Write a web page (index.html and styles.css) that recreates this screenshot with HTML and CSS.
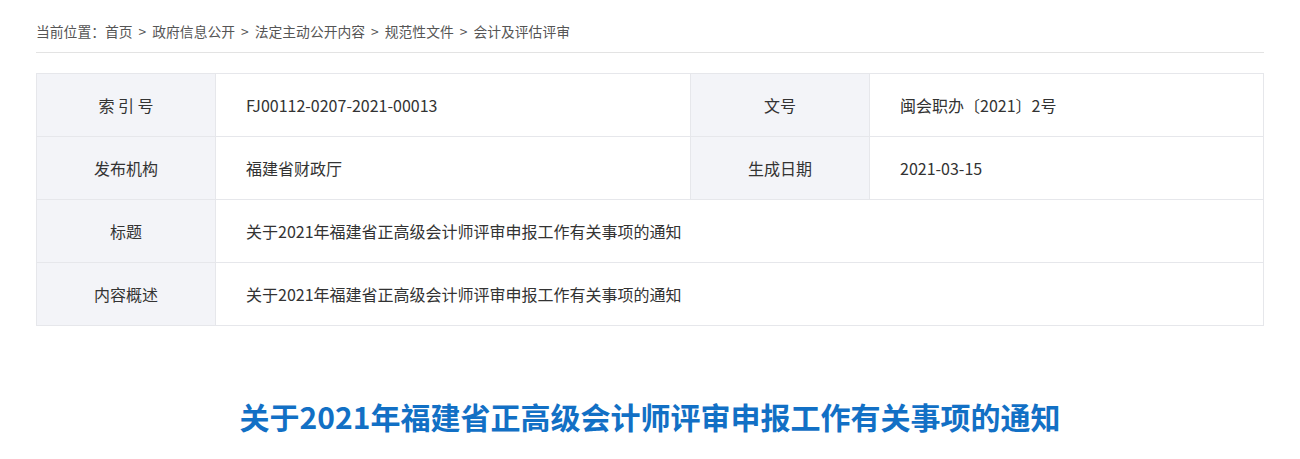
FILE: index.html
```html
<!DOCTYPE html>
<html lang="zh">
<head>
<meta charset="utf-8">
<link rel="stylesheet" href="styles.css">
</head>
<body>
<div class="page">
  <div class="crumb">当前位置：<a>首页</a><span class="sep">&gt;</span><a>政府信息公开</a><span class="sep">&gt;</span><a>法定主动公开内容</a><span class="sep">&gt;</span><a>规范性文件</a><span class="sep">&gt;</span><a>会计及评估评审</a></div>
  <table class="meta">
    <colgroup><col class="c1"><col class="c2"><col class="c3"><col class="c4"></colgroup>
    <tr><th>索 引 号</th><td>FJ00112-0207-2021-00013</td><th>文号</th><td>闽会职办〔2021〕2号</td></tr>
    <tr><th>发布机构</th><td>福建省财政厅</td><th>生成日期</th><td>2021-03-15</td></tr>
    <tr><th>标题</th><td colspan="3">关于2021年福建省正高级会计师评审申报工作有关事项的通知</td></tr>
    <tr><th>内容概述</th><td colspan="3">关于2021年福建省正高级会计师评审申报工作有关事项的通知</td></tr>
  </table>
  <h1 class="title">关于2021年福建省正高级会计师评审申报工作有关事项的通知</h1>
</div>
</body>
</html>
```
FILE: styles.css
```css
html, body { margin: 0; padding: 0; background: #fff; }
body { font-family: "Microsoft YaHei", "Noto Sans CJK SC", sans-serif; color: #333; }
.page { padding: 0 36px; }
.crumb {
  font-size: 13.8px;
  color: #555;
  height: 53px;
  box-sizing: border-box;
  padding-top: 21px;
  line-height: 20px;
  border-bottom: 1px solid #e3e3e3;
}
.crumb a { color: #555; }
.crumb .sep { margin: 0 6px; }
.meta {
  margin-top: 20px;
  width: 100%;
  border-collapse: collapse;
  font-size: 16px;
}
.meta col.c1, .meta col.c3 { width: 179px; }
.meta col.c2 { width: 475px; }
.meta th, .meta td {
  border: 1px solid #e6e7eb;
  height: 62px;
  padding: 0;
  font-weight: normal;
  color: #333;
}
.meta th { background: #f3f4f8; text-align: center; }
.meta td { text-align: left; padding-left: 30px; }
.title {
  margin: 70px 0 0;
  text-align: center;
  font-size: 30px;
  font-weight: bold;
  color: #1270c5;
  line-height: 40px;
}
```
